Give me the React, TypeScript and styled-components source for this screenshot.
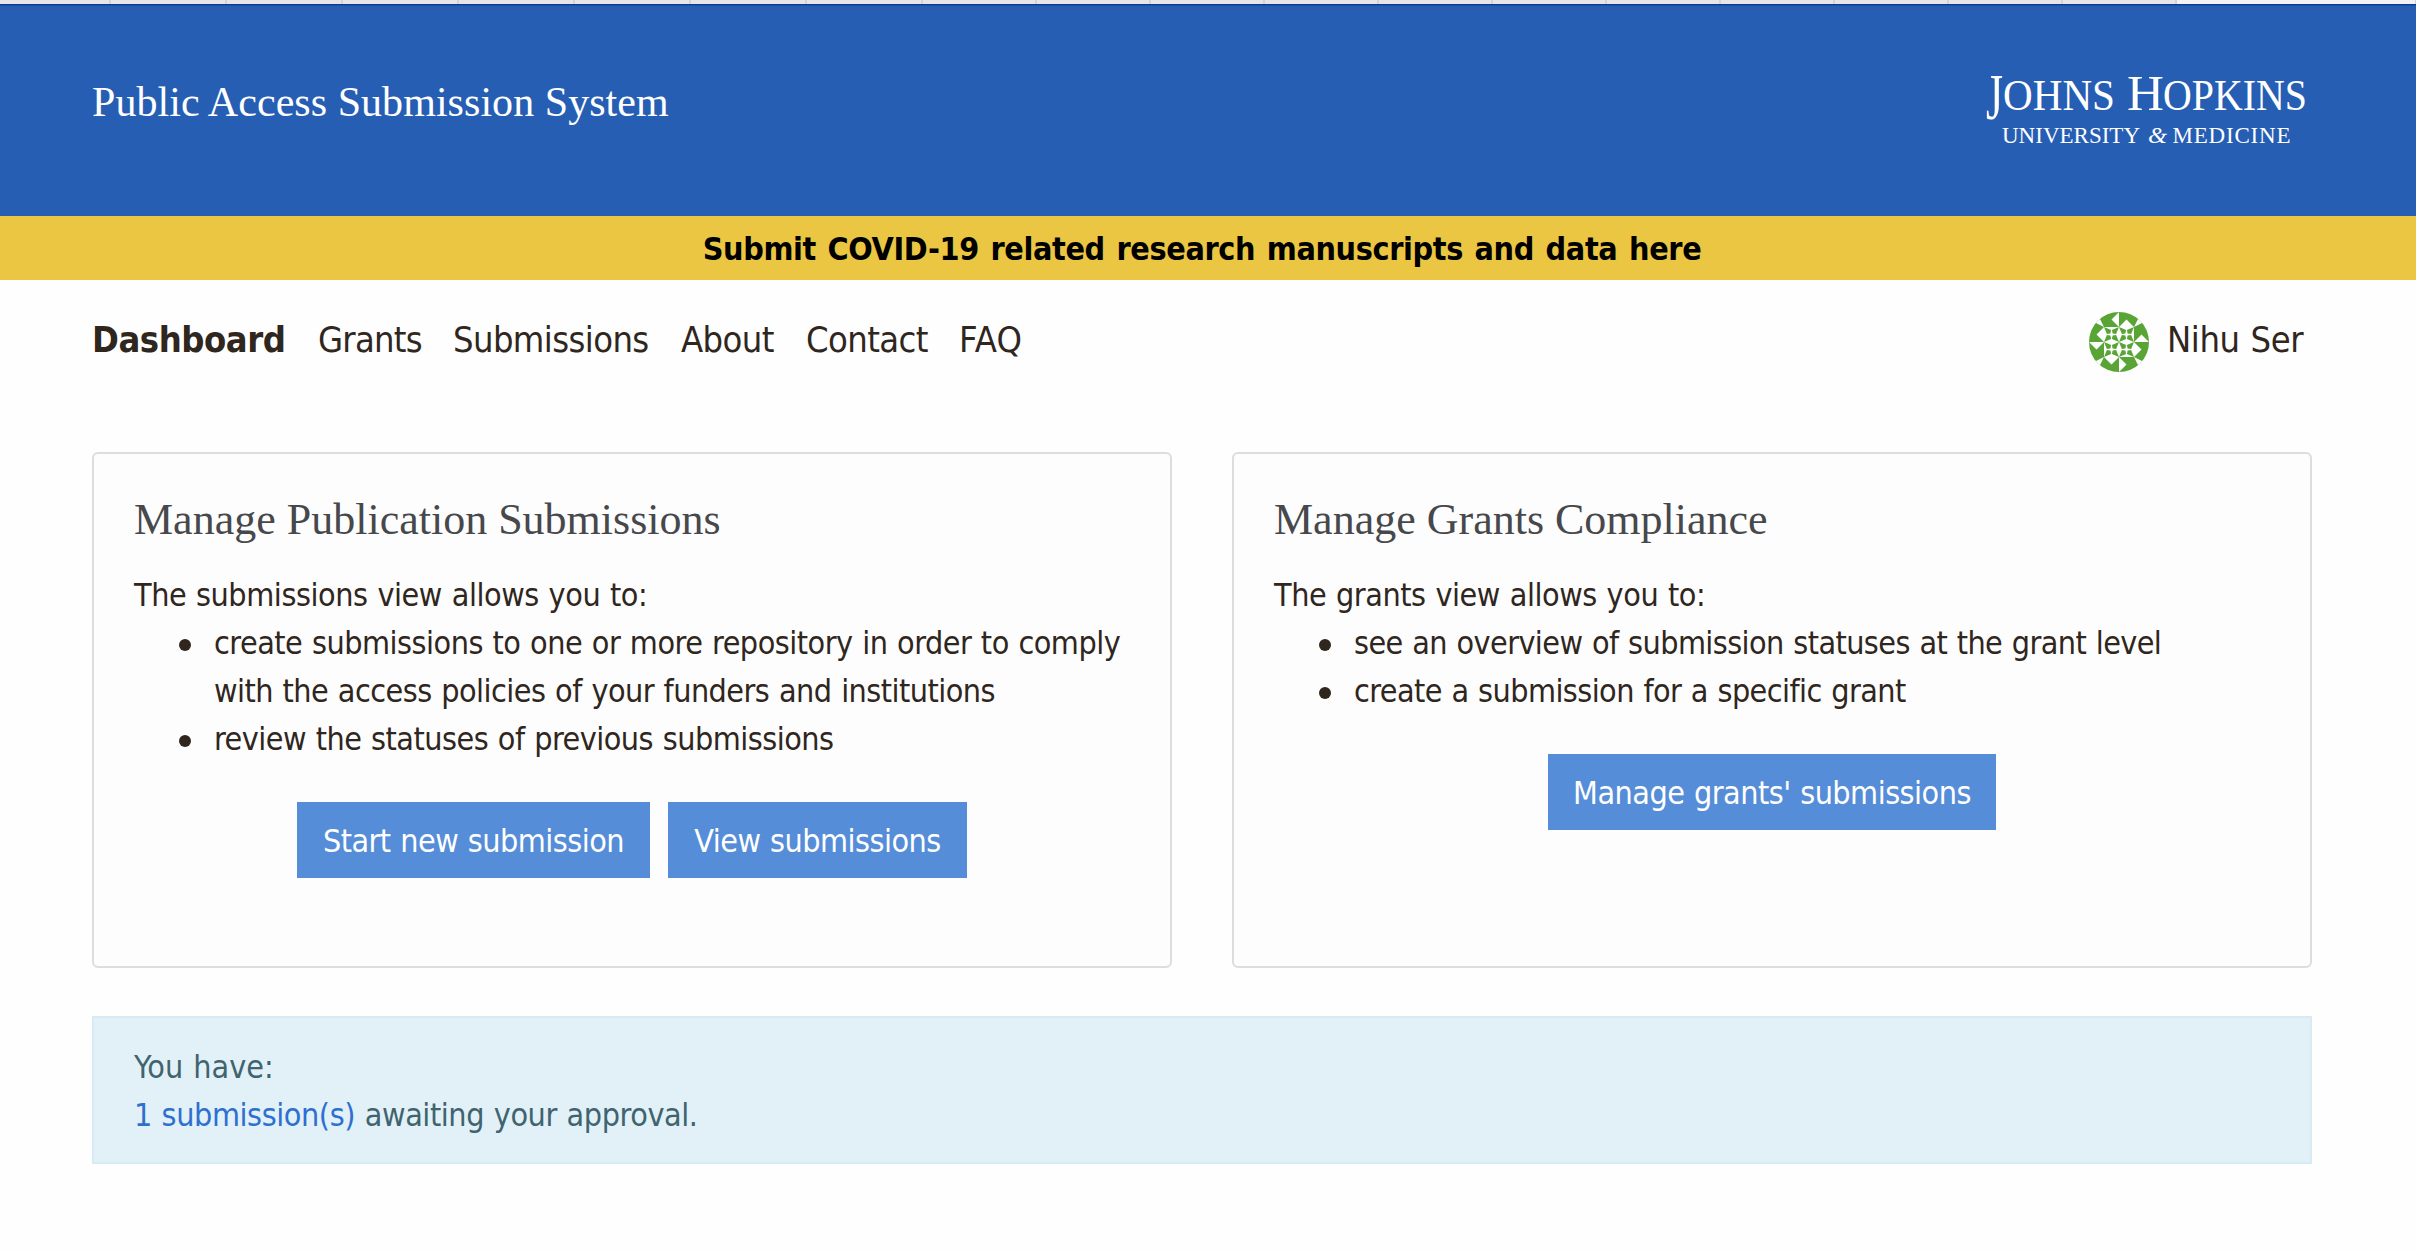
import React from "react";
import styled, { createGlobalStyle } from "styled-components";

const SANS = `"DejaVu Sans Condensed", "DejaVu Sans", Tahoma, sans-serif`;
const SERIF = `"Liberation Serif", "Times New Roman", serif`;

const GlobalStyle = createGlobalStyle`
  * { box-sizing: border-box; }
  body {
    margin: 0;
    background: #fefefe;
    color: #2f261e;
    font-family: ${SANS};
    font-stretch: condensed;
    font-size: 32px;
    line-height: 48px;
    letter-spacing: -0.4px;
    word-spacing: 1px;
  }
`;

const Page = styled.div`
  display: flex;
  flex-direction: column;
  height: 1250px;
  overflow: hidden;
`;

const TabStrip = styled.div`
  display: flex;
  height: 4px;
  background: #e8e5e9;
`;

const BrowserTab = styled.span<{ $width: number; $active?: boolean }>`
  flex: none;
  width: ${(p) => p.$width}px;
  border-right: 2px solid #d6d2d8;
  background: ${(p) => (p.$active ? "#f5f2f6" : "transparent")};
`;

const Header = styled.header`
  display: flex;
  justify-content: space-between;
  align-items: flex-start;
  height: 212px;
  padding: 53px 104px 0 92px;
  border-top: 1px solid #073a92;
  box-shadow: inset 0 1px 0 #1a4fa4;
  background: #265eb4;
`;

const SiteTitle = styled.h1`
  margin: 19px 0 0;
  color: #fff;
  font: 400 42px/50px ${SERIF};
  letter-spacing: 0.05px;
  word-spacing: 0;
`;

const Logo = styled.svg`
  display: block;
  width: 326px;
  height: 92px;
  fill: #fff;
  font-family: ${SERIF};
  letter-spacing: 0;
`;

const Banner = styled.div`
  height: 64px;
  padding: 9px 12px 0 0;
  background: #eac642;
  color: #000;
  font-weight: 700;
  text-align: center;
  letter-spacing: -0.37px;
  word-spacing: 2px;
`;

const Nav = styled.nav`
  display: flex;
  align-items: flex-start;
  height: 172px;
  padding: 32px 104px 0 92px;
  font-size: 36px;
  line-height: 56px;
  white-space: nowrap;
`;

const NavItem = styled.a<{ $width: number; $track: number; $current?: boolean }>`
  flex: none;
  width: ${(p) => p.$width}px;
  font-weight: ${(p) => (p.$current ? 700 : 400)};
  letter-spacing: ${(p) => p.$track}px;
`;

const User = styled.div`
  display: flex;
  align-items: flex-start;
  gap: 18px;
  width: 223px;
  margin-left: auto;
`;

const Avatar = styled.svg`
  flex: none;
  width: 60px;
  height: 60px;
  border-radius: 50%;
`;

const Cards = styled.main`
  display: grid;
  grid-template-columns: 1080px 1080px;
  gap: 60px;
  height: 516px;
  padding-left: 92px;
`;

const Card = styled.section`
  padding: 40px 40px 0;
  border: 2px solid #dcdddd;
  border-radius: 6px;
  background: #fdfdfd;
`;

const CardTitle = styled.h2`
  margin: 0 0 25px;
  color: #47484c;
  font: 400 44px/52px ${SERIF};
  letter-spacing: 0;
  word-spacing: 0;
`;

const Line = styled.span<{ $track: number }>`
  display: block;
  white-space: nowrap;
  letter-spacing: ${(p) => p.$track}px;
`;

const List = styled.ul`
  margin: 0;
  padding: 0 0 0 45px;
  list-style: none;
`;

const Item = styled.li`
  display: flex;
  gap: 23px;

  &::before {
    content: "";
    flex: none;
    width: 12px;
    height: 12px;
    margin-top: 20px;
    border-radius: 50%;
    background: #2f261e;
  }
`;

const Actions = styled.div`
  display: flex;
  justify-content: center;
  gap: 18px;
  margin-top: 39px;
`;

const Button = styled.button<{ $width: number }>`
  width: ${(p) => p.$width}px;
  height: 76px;
  padding: 2px 0 0;
  border: 0;
  background: #558dd8;
  color: #fff;
  font: inherit;
  letter-spacing: -0.52px;
  word-spacing: 1px;
  white-space: nowrap;
`;

const Notice = styled.aside`
  width: 2220px;
  height: 148px;
  margin: 48px 0 0 92px;
  padding: 25px 40px 0;
  border: 2px solid #d7ebf4;
  background: #e2f1f7;
  color: #3f6470;
`;

const NoticeLink = styled.a`
  color: #2e6fd0;
`;

const tabWidths = [111, ...Array(7).fill(116), ...Array(11).fill(114)];

const navItems = [
  { label: "Dashboard", width: 226, track: -0.45, current: true },
  { label: "Grants", width: 135, track: -0.75 },
  { label: "Submissions", width: 228, track: -0.6 },
  { label: "About", width: 125, track: -0.6 },
  { label: "Contact", width: 153, track: -0.6 },
  { label: "FAQ", width: 72, track: 0.3 },
];

const cards = [
  {
    title: "Manage Publication Submissions",
    intro: { text: "The submissions view allows you to:", track: -0.43 },
    items: [
      [
        { text: "create submissions to one or more repository in order to comply", track: -0.5 },
        { text: "with the access policies of your funders and institutions", track: -0.53 },
      ],
      [{ text: "review the statuses of previous submissions", track: -0.51 }],
    ],
    buttons: [
      { text: "Start new submission", width: 353 },
      { text: "View submissions", width: 299 },
    ],
  },
  {
    title: "Manage Grants Compliance",
    intro: { text: "The grants view allows you to:", track: -0.43 },
    items: [
      [{ text: "see an overview of submission statuses at the grant level", track: -0.58 }],
      [{ text: "create a submission for a specific grant", track: -0.57 }],
    ],
    buttons: [{ text: "Manage grants' submissions", width: 448 }],
  },
];

function JohnsHopkinsLogo() {
  const fit = "spacingAndGlyphs";
  return (
    <Logo viewBox="1986 58 326 92">
      <text x="1986" y="119" fontSize="65" textLength="17" lengthAdjust={fit}>J</text>
      <text x="2003" y="110" fontSize="43.5" textLength="112" lengthAdjust={fit}>OHNS</text>
      <text x="2127" y="110" fontSize="51.5" textLength="37" lengthAdjust={fit}>H</text>
      <text x="2163" y="110" fontSize="43.5" textLength="144" lengthAdjust={fit}>OPKINS</text>
      <text x="2002" y="143" fontSize="23" textLength="138" lengthAdjust="spacing">UNIVERSITY</text>
      <text x="2148" y="143" fontSize="23" fontStyle="italic" textLength="19" lengthAdjust={fit}>&amp;</text>
      <text x="2172.5" y="143" fontSize="23" textLength="118" lengthAdjust="spacing">MEDICINE</text>
    </Logo>
  );
}

function Identicon() {
  return (
    <Avatar viewBox="0 0 60 60">
      <rect width="60" height="60" fill="#58a536" />
      <rect x="15" y="15" width="30" height="30" fill="#fff" />
      {[0, 90, 180, 270].map((angle) => (
        <g key={angle} transform={`rotate(${angle} 30 30)`}>
          <path fill="#fff" d="M15 15L7.5 0H0V7.5ZM30 0L22.5 7.5L30 15ZM30 15L37.5 7.5L45 15Z" />
        </g>
      ))}
      {[22.5, 37.5].map((cx) =>
        [22.5, 37.5].map((cy) =>
          [0, 90, 180, 270].map((angle) => (
            <path
              key={`${cx}-${cy}-${angle}`}
              fill="#58a536"
              transform={`translate(${cx} ${cy}) rotate(${angle})`}
              d="M-7.5 -7.5L-0.4 -4.6L-1.1 -1.1L-4.6 -0.4Z"
            />
          ))
        )
      )}
    </Avatar>
  );
}

export default function App() {
  return (
    <Page>
      <GlobalStyle />
      <TabStrip>
        {tabWidths.map((width, i) => (
          <BrowserTab key={i} $width={width} />
        ))}
        <BrowserTab $width={240} $active />
      </TabStrip>
      <Header>
        <SiteTitle>Public Access Submission System</SiteTitle>
        <JohnsHopkinsLogo />
      </Header>
      <Banner>Submit COVID-19 related research manuscripts and data here</Banner>
      <Nav>
        {navItems.map((item) => (
          <NavItem key={item.label} $width={item.width} $track={item.track} $current={item.current}>
            {item.label}
          </NavItem>
        ))}
        <User>
          <Identicon />
          <span>Nihu Ser</span>
        </User>
      </Nav>
      <Cards>
        {cards.map((card) => (
          <Card key={card.title}>
            <CardTitle>{card.title}</CardTitle>
            <Line $track={card.intro.track}>{card.intro.text}</Line>
            <List>
              {card.items.map((lines) => (
                <Item key={lines[0].text}>
                  <div>
                    {lines.map((line) => (
                      <Line key={line.text} $track={line.track}>{line.text}</Line>
                    ))}
                  </div>
                </Item>
              ))}
            </List>
            <Actions>
              {card.buttons.map((button) => (
                <Button key={button.text} $width={button.width}>{button.text}</Button>
              ))}
            </Actions>
          </Card>
        ))}
      </Cards>
      <Notice>
        <Line $track={0}>You have:</Line>
        <Line $track={-0.42}>
          <NoticeLink>1 submission(s)</NoticeLink> awaiting your approval.
        </Line>
      </Notice>
    </Page>
  );
}
